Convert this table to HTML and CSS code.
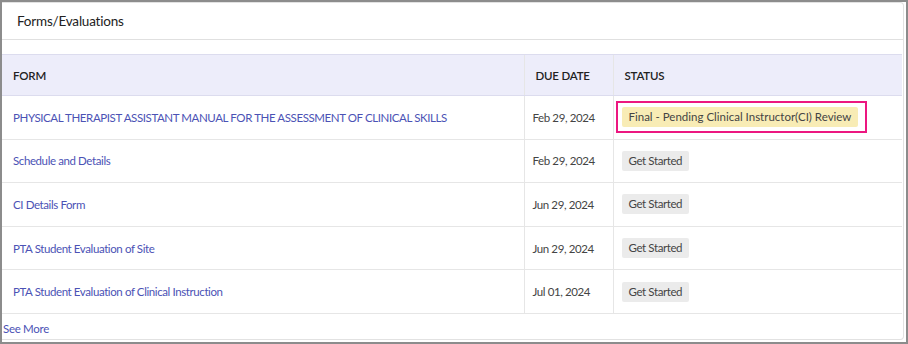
FILE: index.html
```html
<!DOCTYPE html>
<html lang="en">
<head>
  <meta charset="UTF-8" />
  <title>Forms/Evaluations</title>
  <link rel="stylesheet" href="styles.css">
</head>
<body>
  <div class="frame">
    <div class="card">
      <div class="card-title">Forms/Evaluations</div>
      <table class="forms-table">
        <colgroup>
          <col class="col-form">
          <col class="col-date">
          <col class="col-status">
        </colgroup>
        <thead>
          <tr>
            <th>Form</th>
            <th>Due Date</th>
            <th>Status</th>
          </tr>
        </thead>
        <tbody>
          <tr>
            <td><a href="#">PHYSICAL THERAPIST ASSISTANT MANUAL FOR THE ASSESSMENT OF CLINICAL SKILLS</a></td>
            <td class="date">Feb 29, 2024</td>
            <td class="status"><span class="highlight"><span class="badge badge-pending">Final - Pending Clinical Instructor(CI) Review</span></span></td>
          </tr>
          <tr>
            <td><a href="#">Schedule and Details</a></td>
            <td class="date">Feb 29, 2024</td>
            <td class="status"><span class="badge">Get Started</span></td>
          </tr>
          <tr>
            <td><a href="#">CI Details Form</a></td>
            <td class="date">Jun 29, 2024</td>
            <td class="status"><span class="badge">Get Started</span></td>
          </tr>
          <tr>
            <td><a href="#">PTA Student Evaluation of Site</a></td>
            <td class="date">Jun 29, 2024</td>
            <td class="status"><span class="badge">Get Started</span></td>
          </tr>
          <tr>
            <td><a href="#">PTA Student Evaluation of Clinical Instruction</a></td>
            <td class="date">Jul 01, 2024</td>
            <td class="status"><span class="badge">Get Started</span></td>
          </tr>
        </tbody>
      </table>
      <a class="see-more" href="#">See More</a>
    </div>
  </div>
</body>
</html>
```

FILE: styles.css
```css
* {
  box-sizing: border-box;
  margin: 0;
  padding: 0;
}

body {
  font-family: 'Lato', 'Liberation Sans', sans-serif;
  background-color: #fff;
  color: #222;
  width: 908px;
  height: 344px;
  overflow: hidden;
}

.frame {
  width: 908px;
  height: 344px;
  border: 2px solid #8c8c8c;
  background: #fff;
}

.card {
  width: 902px;
  height: 338px;
  border: 1px solid #e2e2e2;
  border-left: none;
  border-radius: 0 4px 4px 0;
  background: #fff;
}

.card-title {
  font-size: 13.5px;
  letter-spacing: -0.2px;
  color: #222;
  padding: 10px 15px 0;
  height: 37px;
  border-bottom: 1px solid #e0e0e0;
}

.forms-table {
  width: 900px;
  margin-top: 14px;
  border-collapse: collapse;
  table-layout: fixed;
  font-size: 11.5px;
  letter-spacing: -0.4px;
}

.col-form {
  width: 522px;
}

.col-date {
  width: 89px;
}

.forms-table th {
  background: #ededfa;
  text-align: left;
  font-weight: 600;
  color: #222;
  text-transform: uppercase;
  letter-spacing: -0.2px;
  height: 41px;
  padding: 0 11px;
  border-top: 1px solid #dcdcee;
  border-bottom: 1px solid #dcdcee;
}

.forms-table td {
  height: 43.6px;
  padding: 0 11px;
  border-bottom: 1px solid #e6e6e6;
  color: #444;
  white-space: nowrap;
}

.forms-table th + th,
.forms-table td + td {
  border-left: 1px solid #e6e6e6;
}

.forms-table a {
  color: #4b52b5;
  text-decoration: none;
}

.forms-table td.date {
  padding-left: 8px;
}

.forms-table td.status {
  padding-left: 8px;
}

.badge {
  display: inline-block;
  background: #ebebeb;
  color: #444;
  padding: 3px 7px;
  border-radius: 2px;
  line-height: 14px;
}

.highlight {
  display: inline-block;
  border: 2px solid #ec1780;
  padding: 4px 7px 4px 4px;
  margin-left: -6px;
}

.badge-pending {
  background: #f8ecb5;
  letter-spacing: 0;
}

.see-more {
  display: block;
  margin-top: 8px;
  padding-left: 1px;
  font-size: 11.5px;
  letter-spacing: -0.3px;
  color: #4b52b5;
  text-decoration: none;
}
```
